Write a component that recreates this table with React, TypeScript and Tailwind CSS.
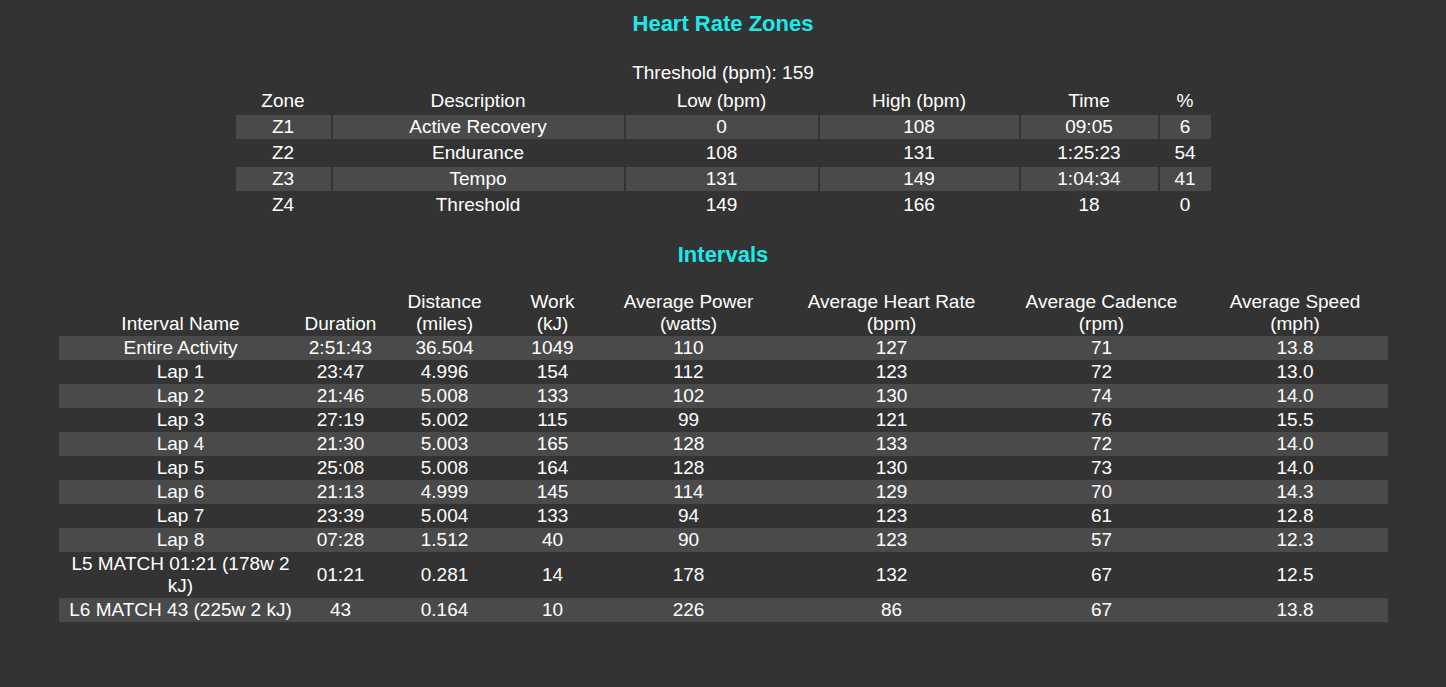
import React from 'react';

interface Zone {
  zone: string;
  description: string;
  low: string;
  high: string;
  time: string;
  pct: string;
}

interface Interval {
  name: string;
  duration: string;
  distance: string;
  work: string;
  power: string;
  hr: string;
  cadence: string;
  speed: string;
}

const zones: Zone[] = [
  { zone: 'Z1', description: 'Active Recovery', low: '0', high: '108', time: '09:05', pct: '6' },
  { zone: 'Z2', description: 'Endurance', low: '108', high: '131', time: '1:25:23', pct: '54' },
  { zone: 'Z3', description: 'Tempo', low: '131', high: '149', time: '1:04:34', pct: '41' },
  { zone: 'Z4', description: 'Threshold', low: '149', high: '166', time: '18', pct: '0' },
];

const intervals: Interval[] = [
  { name: 'Entire Activity', duration: '2:51:43', distance: '36.504', work: '1049', power: '110', hr: '127', cadence: '71', speed: '13.8' },
  { name: 'Lap 1', duration: '23:47', distance: '4.996', work: '154', power: '112', hr: '123', cadence: '72', speed: '13.0' },
  { name: 'Lap 2', duration: '21:46', distance: '5.008', work: '133', power: '102', hr: '130', cadence: '74', speed: '14.0' },
  { name: 'Lap 3', duration: '27:19', distance: '5.002', work: '115', power: '99', hr: '121', cadence: '76', speed: '15.5' },
  { name: 'Lap 4', duration: '21:30', distance: '5.003', work: '165', power: '128', hr: '133', cadence: '72', speed: '14.0' },
  { name: 'Lap 5', duration: '25:08', distance: '5.008', work: '164', power: '128', hr: '130', cadence: '73', speed: '14.0' },
  { name: 'Lap 6', duration: '21:13', distance: '4.999', work: '145', power: '114', hr: '129', cadence: '70', speed: '14.3' },
  { name: 'Lap 7', duration: '23:39', distance: '5.004', work: '133', power: '94', hr: '123', cadence: '61', speed: '12.8' },
  { name: 'Lap 8', duration: '07:28', distance: '1.512', work: '40', power: '90', hr: '123', cadence: '57', speed: '12.3' },
  { name: 'L5 MATCH 01:21 (178w 2 kJ)', duration: '01:21', distance: '0.281', work: '14', power: '178', hr: '132', cadence: '67', speed: '12.5' },
  { name: 'L6 MATCH 43 (225w 2 kJ)', duration: '43', distance: '0.164', work: '10', power: '226', hr: '86', cadence: '67', speed: '13.8' },
];

const ZoneTable: React.FC = () => (
  <table className="mx-auto mt-[3px] table-fixed border-separate border-spacing-[2px]">
    <colgroup>
      <col className="w-[95px]" />
      <col className="w-[291px]" />
      <col className="w-[192px]" />
      <col className="w-[199px]" />
      <col className="w-[137px]" />
      <col className="w-[51px]" />
    </colgroup>
    <thead>
      <tr className="h-[24px]">
        {['Zone', 'Description', 'Low (bpm)', 'High (bpm)', 'Time', '%'].map((h) => (
          <th key={h} className="p-0 font-normal leading-[22px] text-center">{h}</th>
        ))}
      </tr>
    </thead>
    <tbody>
      {zones.map((z, i) => (
        <tr key={z.zone} className="h-[24px]">
          {[z.zone, z.description, z.low, z.high, z.time, z.pct].map((v, j) => (
            <td key={j} className={`p-0 leading-[22px] text-center ${i % 2 === 0 ? 'bg-[#4a4a4a]' : ''}`}>{v}</td>
          ))}
        </tr>
      ))}
    </tbody>
  </table>
);

const IntervalTable: React.FC = () => (
  <table className="mx-auto mt-[23px] w-[1329px] table-fixed border-collapse">
    <colgroup>
      <col className="w-[244px]" />
      <col className="w-[76px]" />
      <col className="w-[132px]" />
      <col className="w-[84px]" />
      <col className="w-[188px]" />
      <col className="w-[218px]" />
      <col className="w-[202px]" />
      <col className="w-[185px]" />
    </colgroup>
    <thead>
      <tr>
        <th className="px-0 py-[1px] align-bottom font-normal leading-[22px]">Interval Name</th>
        <th className="px-0 py-[1px] align-bottom font-normal leading-[22px]">Duration</th>
        <th className="px-0 py-[1px] align-bottom font-normal leading-[22px]">Distance<br />(miles)</th>
        <th className="px-0 py-[1px] align-bottom font-normal leading-[22px]">Work<br />(kJ)</th>
        <th className="px-0 py-[1px] align-bottom font-normal leading-[22px]">Average Power<br />(watts)</th>
        <th className="px-0 py-[1px] align-bottom font-normal leading-[22px]">Average Heart Rate<br />(bpm)</th>
        <th className="px-0 py-[1px] align-bottom font-normal leading-[22px]">Average Cadence<br />(rpm)</th>
        <th className="px-0 py-[1px] align-bottom font-normal leading-[22px]">Average Speed<br />(mph)</th>
      </tr>
    </thead>
    <tbody>
      {intervals.map((r, i) => (
        <tr key={r.name} className={i % 2 === 0 ? 'bg-[#4a4a4a]' : ''}>
          {[r.name, r.duration, r.distance, r.work, r.power, r.hr, r.cadence, r.speed].map((v, j) => (
            <td key={j} className="px-[2px] py-[1px] text-center leading-[22px]">{v}</td>
          ))}
        </tr>
      ))}
    </tbody>
  </table>
);

export default function App() {
  return (
    <div className="min-h-screen bg-[#333333] pt-[11px] text-[19px] text-white [font-family:'Liberation_Sans',Arial,sans-serif]">
      <h3 className="text-center text-[22px] font-bold leading-[25px] text-[#1ee9e9]">Heart Rate Zones</h3>
      <p className="mt-[26px] text-center leading-[22px]">Threshold (bpm): 159</p>
      <ZoneTable />
      <h3 className="mt-[23px] text-center text-[22px] font-bold leading-[25px] text-[#1ee9e9]">Intervals</h3>
      <IntervalTable />
    </div>
  );
}
